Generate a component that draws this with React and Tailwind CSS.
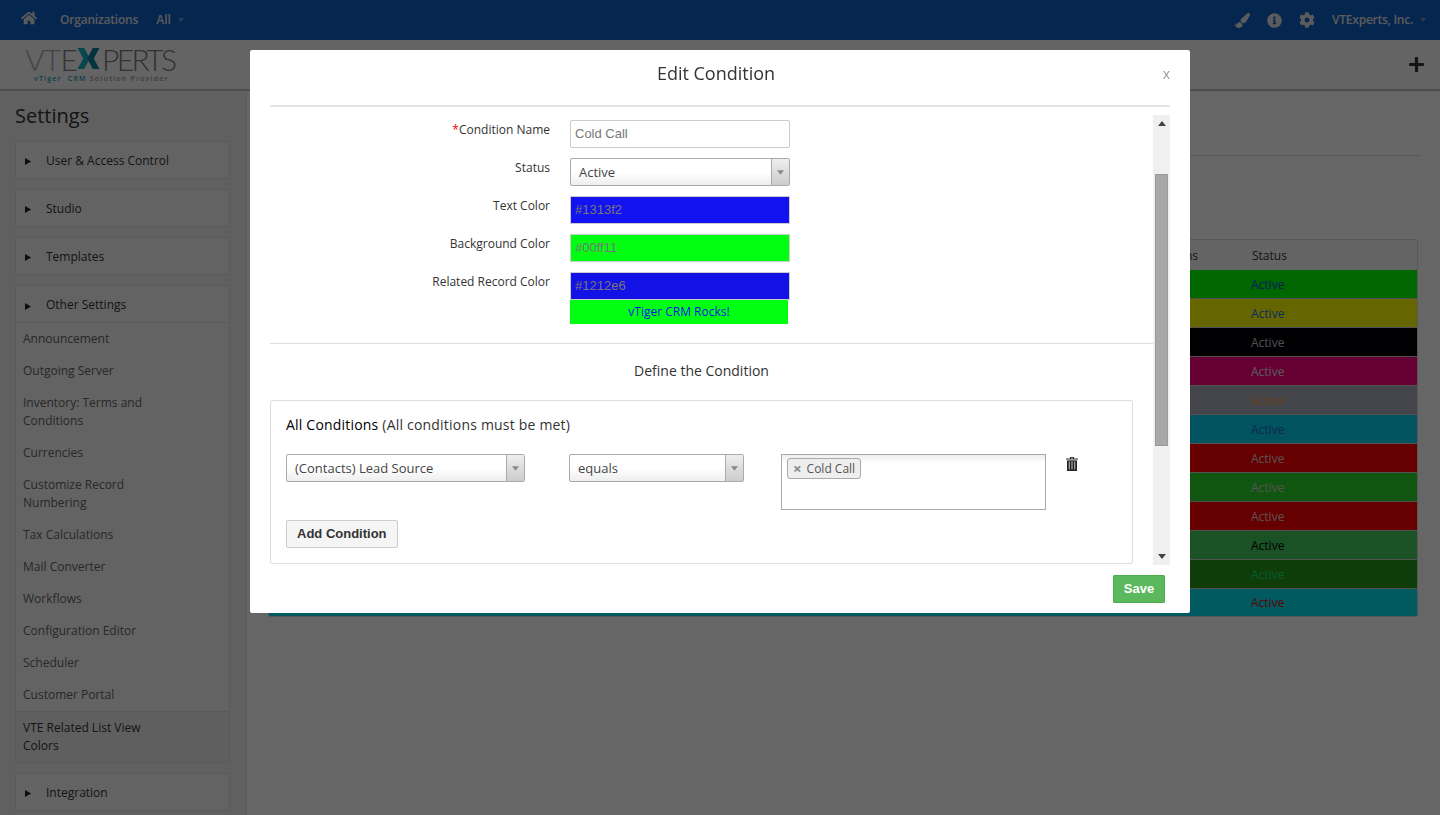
import { FaHome, FaPaintBrush, FaInfoCircle, FaCog, FaPlus } from "react-icons/fa";

const font = "font-['Open_Sans',sans-serif]";
const arial = "font-['Liberation_Sans',Arial,sans-serif]";

const links = [
  ["Announcement"],
  ["Outgoing Server"],
  ["Inventory: Terms and", "Conditions"],
  ["Currencies"],
  ["Customize Record", "Numbering"],
  ["Tax Calculations"],
  ["Mail Converter"],
  ["Workflows"],
  ["Configuration Editor"],
  ["Scheduler"],
  ["Customer Portal"],
];

const rows = [
  { bg: "bg-[#00ff00]", text: "text-[#1050e0]" },
  { bg: "bg-[#ffff00]", text: "text-[#1a6fe0]" },
  { bg: "bg-[#000008]", text: "text-[#d0c4c4]" },
  { bg: "bg-[#ff0080]", text: "text-[#e0e0e0]" },
  { bg: "bg-[#aaaabc]", text: "text-[#f0a040]" },
  { bg: "bg-[#00d0ee]", text: "text-[#3060c0]" },
  { bg: "bg-[#ff0000]", text: "text-[#e0d0d0]" },
  { bg: "bg-[#2ad42a]", text: "text-[#d0d0d0]" },
  { bg: "bg-[#ff0000]", text: "text-[#e0d0d0]" },
  { bg: "bg-[#41cd5c]", text: "text-[#000000]" },
  { bg: "bg-[#259819]", text: "text-[#10e070]" },
  { bg: "bg-[#00e0ee]", text: "text-[#d01010]" },
];

function Arrow({ className }) {
  return (
    <svg viewBox="0 0 8 5" className={className} fill="currentColor">
      <path d="M0 0h8L4 5z" />
    </svg>
  );
}

function SideArrow() {
  return (
    <span className="w-[30px] pl-[9px] pt-[2px]">
      <svg viewBox="0 0 6 7" className="w-[6px] h-[7px]" fill="#222">
        <path d="M0 0l6 3.5L0 7z" />
      </svg>
    </span>
  );
}

function AccordionHead({ label }) {
  return (
    <div className="h-[38px] pt-[1px] flex items-center border border-[#e2e2e2] bg-[#f7f7f7] text-[12px] text-[#333]">
      <SideArrow />
      <span>{label}</span>
    </div>
  );
}

function Sidebar() {
  return (
    <aside className="w-[247px] shrink-0 bg-[#f0f0f0] border-r border-[#e6e6e6] px-[15px] pt-[13px]">
      <h2 className="text-[20px] leading-[24px] text-[#333] mb-[13px]">Settings</h2>
      <div className="w-[215px] flex flex-col gap-[10px]">
        <AccordionHead label="User & Access Control" />
        <AccordionHead label="Studio" />
        <AccordionHead label="Templates" />
        <div className="border border-[#e2e2e2] bg-[#f7f7f7] text-[12px]">
          <div className="h-[37px] pt-[2px] flex items-center border-b border-[#e2e2e2] text-[#333]">
            <SideArrow />
            <span>Other Settings</span>
          </div>
          {links.map((l) => (
            <div key={l[0]} className="pl-[7px] pr-[8px] py-[7px] leading-[18px] text-[#666]">
              {l.map((t) => (
                <div key={t}>{t}</div>
              ))}
            </div>
          ))}
          <div className="pl-[7px] pr-[8px] pt-[7px] pb-[7px] leading-[18px] text-[#333] bg-[#eeeeee] border-t border-[#dedede]">
            <div>VTE Related List View</div>
            <div>Colors</div>
          </div>
        </div>
        <AccordionHead label="Integration" />
      </div>
    </aside>
  );
}

function Table() {
  return (
    <div className="mt-[83px] w-[1150px] border border-[#dddddd] rounded-[2px] text-[12px] overflow-hidden">
      <div className="h-[30px] pt-[1px] flex items-center bg-[#fafafa] text-[#333]">
        <span className="w-[929px] text-right">Conditions</span>
        <span className="pl-[54px]">Status</span>
      </div>
      {rows.map((r, i) => (
        <div key={i} className={`h-[29px] last:h-[27px] pt-[1px] flex items-center border-b border-[#cccccc] last:border-b-0 ${r.bg}`}>
          <span className={`pl-[982px] ${r.text}`}>Active</span>
        </div>
      ))}
    </div>
  );
}

function Select({ value, className }) {
  return (
    <div className={`h-[28px] flex items-center border border-[#aaaaaa] rounded-[2px] bg-gradient-to-b from-white from-50% to-[#eeeeee] text-[13px] text-[#444] ${className}`}>
      <span className="flex-1 pl-[8px] pt-[1px]">{value}</span>
      <span className="w-[18px] h-full flex items-center justify-center border-l border-[#aaaaaa] bg-gradient-to-b from-[#eeeeee] to-[#cccccc] text-[#888]">
        <Arrow className="w-[7px] h-[5px]" />
      </span>
    </div>
  );
}

function FormRow({ label, required, children }) {
  return (
    <div className="flex gap-[20px] mb-[10px]">
      <label className="w-[280px] text-right text-[12px] leading-[18px] text-[#333] pt-[1px]">
        {required && <span className="text-[#ff0000]">*</span>}
        {label}
      </label>
      {children}
    </div>
  );
}

function ColorInput({ value, bg }) {
  return (
    <div className={`w-[220px] h-[28px] flex items-center pl-[4px] border border-[#cccccc] text-[13px] text-[#777] ${arial} ${bg}`}>
      {value}
    </div>
  );
}

function TrashIcon() {
  return (
    <svg viewBox="0 0 12 14" className="w-[12px] h-[14px]">
      <path d="M4 0h4v1.4h4v1.2H0V1.4h4zM5 .8v.6h2V.8z" fill="#222" />
      <path d="M1 3.4h10V14H1z" fill="#222" />
      <path d="M2.6 4.6h1.4v8H2.600zM5.300 4.600h1.400v8H5.300zM8 4.600h1.400v8H8z" fill="#999" />
    </svg>
  );
}

function Modal() {
  return (
    <div className={`fixed left-[250px] top-[50px] w-[940px] h-[563px] bg-white rounded-[2px] px-[20px] text-[#333] ${font}`}>
      <div className="relative h-[57px] border-b-2 border-[#e5e5e5] flex items-start justify-center">
        <h3 className="text-[18px] leading-[24px] pt-[11px] pr-[8px] text-[#333]">Edit Condition</h3>
        <span className="absolute right-0 top-[16px] text-[14px] leading-[16px] text-[#999]">x</span>
      </div>
      <div className="flex h-[450px] mt-[8px] overflow-hidden">
        <div className="w-[883px] pt-[5px]">
          <FormRow label="Condition Name" required>
            <div className={`w-[220px] h-[28px] flex items-center pl-[4px] border border-[#cccccc] rounded-[2px] text-[13px] text-[#777] ${arial}`}>
              Cold Call
            </div>
          </FormRow>
          <FormRow label="Status">
            <Select value="Active" className="w-[220px]" />
          </FormRow>
          <FormRow label="Text Color">
            <ColorInput value="#1313f2" bg="bg-[#1313f2]" />
          </FormRow>
          <FormRow label="Background Color">
            <ColorInput value="#00ff11" bg="bg-[#00ff11]" />
          </FormRow>
          <div className="flex gap-[20px]">
            <label className="w-[280px] text-right text-[12px] leading-[18px] text-[#333] pt-[1px]">Related Record Color</label>
            <div>
              <ColorInput value="#1212e6" bg="bg-[#1212e6]" />
              <div className="w-[218px] h-[24px] flex items-center justify-center bg-[#00ff11] text-[12px] text-[#1212e6]">
                vTiger CRM Rocks!
              </div>
            </div>
          </div>
          <div className="mt-[19px] border-t border-[#dddddd] pt-[17px] pr-[20px] text-center text-[14px] leading-[20px] text-[#333]">
            Define the Condition
          </div>
          <div className="mt-[19px] w-[863px] h-[164px] border border-[#dddddd] rounded-[2px] px-[15px] pt-[14px]">
            <p className="text-[14px] leading-[20px] tracking-[0.2px] text-[#333]">
              <span className="text-[#000]">All Conditions</span> (All conditions must be met)
            </p>
            <div className="flex mt-[19px]">
              <Select value="(Contacts) Lead Source" className="w-[239px]" />
              <Select value="equals" className="w-[175px] ml-[44px]" />
              <div className="ml-[37px] w-[265px] h-[56px] border border-[#aaaaaa] bg-gradient-to-b from-[#eeeeee] from-0% to-white to-15% pl-[5px] pt-[3px]">
                <div className="flex w-fit items-center h-[21px] pl-[5px] pr-[5px] gap-[5px] border border-[#aaaaaa] rounded-[3px] bg-[#eeeeee] text-[12px] text-[#555]">
                  <span className="text-[15px] font-bold text-[#888] leading-none">×</span>
                  Cold Call
                </div>
              </div>
              <div className="ml-[20px] pt-[3px]">
                <TrashIcon />
              </div>
            </div>
            <button className={`mt-[10px] h-[28px] px-[10px] border border-[#cccccc] bg-[#f5f5f5] rounded-[2px] text-[13px] font-bold text-[#333] ${arial}`}>
              Add Condition
            </button>
          </div>
        </div>
        <div className="w-[17px] bg-[#f0f0f0] flex flex-col items-center">
          <span className="h-[17px] flex items-center justify-center text-[#444]">
            <Arrow className="w-[8px] h-[5px] rotate-180" />
          </span>
          <span className="mt-[42px] w-[13px] h-[272px] bg-[#a8a8a8] border border-[#999]" />
          <span className="mt-auto h-[17px] flex items-center justify-center text-[#444]">
            <Arrow className="w-[8px] h-[5px]" />
          </span>
        </div>
      </div>
      <div className="flex justify-end pt-[10px] pr-[5px]">
        <button className={`h-[28px] w-[52px] bg-[#5cb85c] border border-[#4cae4c] rounded-[1px] text-white text-[13px] font-bold ${arial}`}>
          Save
        </button>
      </div>
    </div>
  );
}

export default function App() {
  return (
    <div className={`relative h-[815px] overflow-hidden bg-white flex flex-col ${font}`}>
      <header className="h-[40px] shrink-0 bg-[#0d5fc6] flex items-center text-[#e4e4e4] text-[12px]">
        <FaHome className="ml-[21px] w-[16px] h-[16px] mb-[5px]" />
        <span className="ml-[23px] font-semibold tracking-[-0.2px]">Organizations</span>
        <span className="ml-[18px] font-semibold">All</span>
        <Arrow className="ml-[6px] w-[8px] h-[4px] text-[#6b94cc]" />
        <div className="ml-auto flex items-center">
          <FaPaintBrush className="w-[15px] h-[15px]" />
          <FaInfoCircle className="ml-[17px] w-[15px] h-[15px]" />
          <FaCog className="ml-[17px] w-[16px] h-[16px]" />
          <span className="ml-[17px] font-semibold tracking-[-0.25px]">VTExperts, Inc.</span>
          <Arrow className="ml-[6px] mr-[13px] w-[8px] h-[4px] text-[#6b94cc]" />
        </div>
      </header>

      <div className="h-[51px] shrink-0 bg-[#fafafa] border-b-2 border-[#c0c0c0] flex items-start justify-between">
        <div className="ml-[25px] pt-[3px]">
          <div className="flex items-center h-[31px] text-[30px] leading-none font-['Lato',sans-serif] font-light">
            <span className="text-[#aaaaaa] tracking-[-0.8px]">VT</span>
            <span className="text-[#808080] tracking-[-0.8px]">E</span>
            <svg viewBox="0 0 23 22" className="w-[23px] h-[21px] mr-[2px]">
              <path d="M0 0h7l6 11-6 11H0l6-11z" fill="#17b0c8" />
              <path d="M23 0h-7l-6 11 6 11h7l-6-11z" fill="#0e7f9a" />
            </svg>
            <span className="text-[#7a7a7a] tracking-[-2.6px]">PERTS</span>
          </div>
          <div className="text-[7px] leading-[10px] tracking-[1.2px] font-semibold ml-[9px]">
            <span className="text-[#1a9fb0]">vTiger&nbsp; CRM</span> <span className="text-[#999]">Solution Provider</span>
          </div>
        </div>
        <FaPlus className="mt-[16px] mr-[15px] w-[17px] h-[17px] text-[#333]" />
      </div>

      <div className="flex flex-1 min-h-0">
        <Sidebar />
        <main className="flex-1 pl-[21px] pt-[64px]">
          <div className="w-[1152px] border-t border-[#dddddd]" />
          <Table />
        </main>
      </div>

      <div className="fixed inset-0 bg-black/60" />
      <Modal />
    </div>
  );
}
